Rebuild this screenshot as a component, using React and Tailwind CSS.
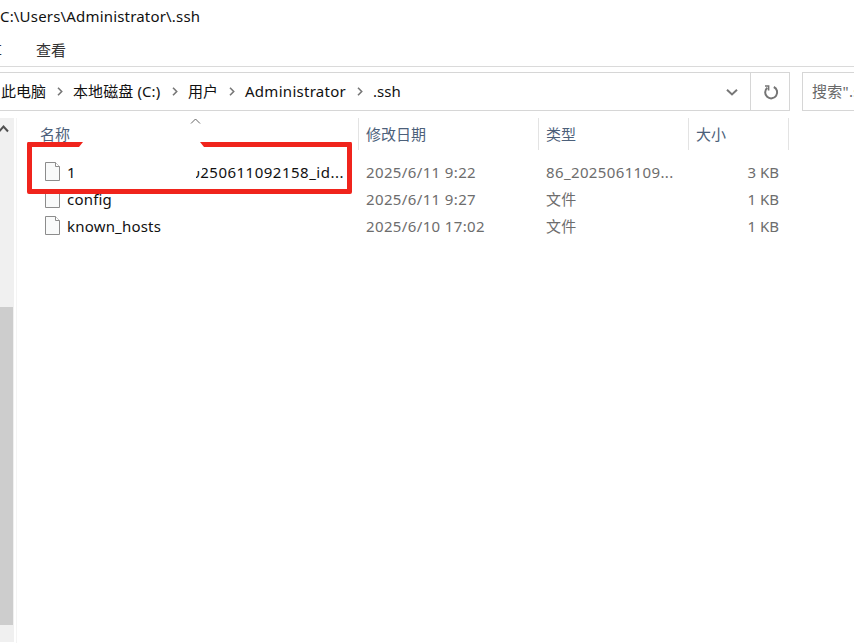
import React from "react";

const files = [
  { name: "1", tail: "0250611092158_id...", date: "2025/6/11 9:22", type: "86_2025061109...", size: "3 KB" },
  { name: "config", date: "2025/6/11 9:27", type: "文件", size: "1 KB" },
  { name: "known_hosts", date: "2025/6/10 17:02", type: "文件", size: "1 KB" },
];

function Crumb() {
  return (
    <svg className="h-[10px] w-[6px] shrink-0" viewBox="0 0 6 10" fill="none" stroke="#777" strokeWidth="1.6">
      <path d="M1 .7 4.7 4.5 1 8.3" />
    </svg>
  );
}

function FileIcon() {
  return (
    <svg className="mb-[2px] h-[19px] w-[15px] shrink-0" viewBox="0 0 15 19" fill="#f9fafa" stroke="#8c8c8c" strokeWidth="1">
      <path d="M.5.5H10.5L14.5 4.5V18.5H.5Z" />
      <path d="M10.5.5V4.5H14.5" fill="#fff" />
    </svg>
  );
}

function Header({ children, className }) {
  return (
    <div className={"h-8 shrink-0 border-r border-[#e3e3e3] pl-[7px] leading-[33px] " + className}>{children}</div>
  );
}

export default function App() {
  return (
    <div className="flex h-[643px] w-[854px] flex-col overflow-hidden whitespace-nowrap bg-white font-['Noto_Sans','Noto_Sans_CJK_SC',sans-serif] text-[15px] text-[#111]">
      <div className="h-[34px] shrink-0 leading-[33px] tracking-[0.18px]">C:\Users\Administrator\.ssh</div>
      <div className="flex h-8 shrink-0 items-center text-[#333]">
        <span className="flex w-[2px] justify-end overflow-hidden">享</span>
        <span className="ml-[34px]">查看</span>
      </div>
      <div className="h-px shrink-0 bg-[#dadada]" />

      <div className="mt-[5px] flex h-[39px] shrink-0">
        <div className="flex w-[751px] items-center border-y border-r border-[#d6d6d6]">
          <span className="w-[57px] pl-[1px]">此电脑</span>
          <Crumb />
          <span className="ml-[10px] w-[99px] tracking-[0.1px]">本地磁盘 (C:)</span>
          <Crumb />
          <span className="ml-[10px] w-[41px]">用户</span>
          <Crumb />
          <span className="ml-[10px] w-[112px] tracking-[0.28px]">Administrator</span>
          <Crumb />
          <span className="ml-[10px]">.ssh</span>
          <svg className="ml-auto mr-[12px] h-[8px] w-[12px]" viewBox="0 0 12 8" fill="none" stroke="#777" strokeWidth="2">
            <path d="M1 1.8 6 6.5 11 1.8" />
          </svg>
        </div>
        <div className="flex w-[39px] items-center justify-center border-y border-r border-[#d6d6d6] pl-[2px]">
          <svg className="h-4 w-4" viewBox="0 0 16 16" fill="none" stroke="#757575" strokeWidth="2">
            <path d="M10.8 3A6 6 0 1 1 4.3 3.8" />
            <path d="M2 2H5.6V6.4" strokeWidth="1.6" />
          </svg>
        </div>
        <div className="ml-[12px] flex flex-1 items-center overflow-hidden border-y border-l border-[#d6d6d6] pl-[9px] tracking-[0.3px] text-[#686868]">
          搜索".ssh"
        </div>
      </div>

      <div className="relative flex min-h-0 flex-1 pt-[7px]">
        <div className="flex h-[524px] w-[14px] shrink-0 flex-col bg-[#f0f0f0]">
          <svg className="mt-[6px] h-[9px] w-[9px]" viewBox="0 0 9 9" fill="none" stroke="#505050" strokeWidth="2">
            <path d="M-1 7.5 3.5 2.5 8 7.5" />
          </svg>
          <div className="mt-[174px] h-[318px] w-[13px] bg-[#cdcdcd]" />
        </div>
        <div className="ml-[2px] w-px shrink-0 bg-[#f4f4f4]" />

        <div className="flex flex-1 flex-col">
          <div className="flex h-[41px] text-[#4c607a]">
            <Header className="relative w-[342px] pl-[23px]">
              名称
              <svg className="absolute left-[173px] top-0 h-[7px] w-[11px]" viewBox="0 0 11 7" fill="none" stroke="#666" strokeWidth="1">
                <path d="M1 5.5 5.5 1 10 5.5" />
              </svg>
            </Header>
            <Header className="w-[180px]">修改日期</Header>
            <Header className="w-[150px]">类型</Header>
            <Header className="w-[100px]">大小</Header>
          </div>
          {files.map((f) => (
            <div key={f.name} className="flex h-[27px] items-center text-[#6d6d6d]">
              <div className="flex w-[349px] items-center pl-[28px] text-[#111]">
                <FileIcon />
                <span className="ml-[7px] tracking-[0.2px]">{f.name}</span>
                {f.tail && (
                  <span className="relative ml-auto mr-[22px] flex w-[148px] justify-end overflow-hidden tracking-[0.5px]">
                    {f.tail}
                    <span className="absolute left-0 top-0 h-[10px] w-[6px] bg-white" />
                  </span>
                )}
              </div>
              <span className="w-[180px] tracking-[0.37px]">{f.date}</span>
              <span className="w-[150px] tracking-[0.37px]">{f.type}</span>
              <span className="w-[83px] text-right">{f.size}</span>
            </div>
          ))}
        </div>

        <svg className="absolute left-[26px] top-[30px] h-[54px] w-[327px]" viewBox="0 0 327 54" fill="#f0241c">
          <path d="M2 1H57L53 6H6V48H321V6H178L174 1H325Q326 1 326 3V51Q326 53 324 53H3Q1 53 1 51V3Q1 1 2 1Z" />
        </svg>
      </div>
    </div>
  );
}
